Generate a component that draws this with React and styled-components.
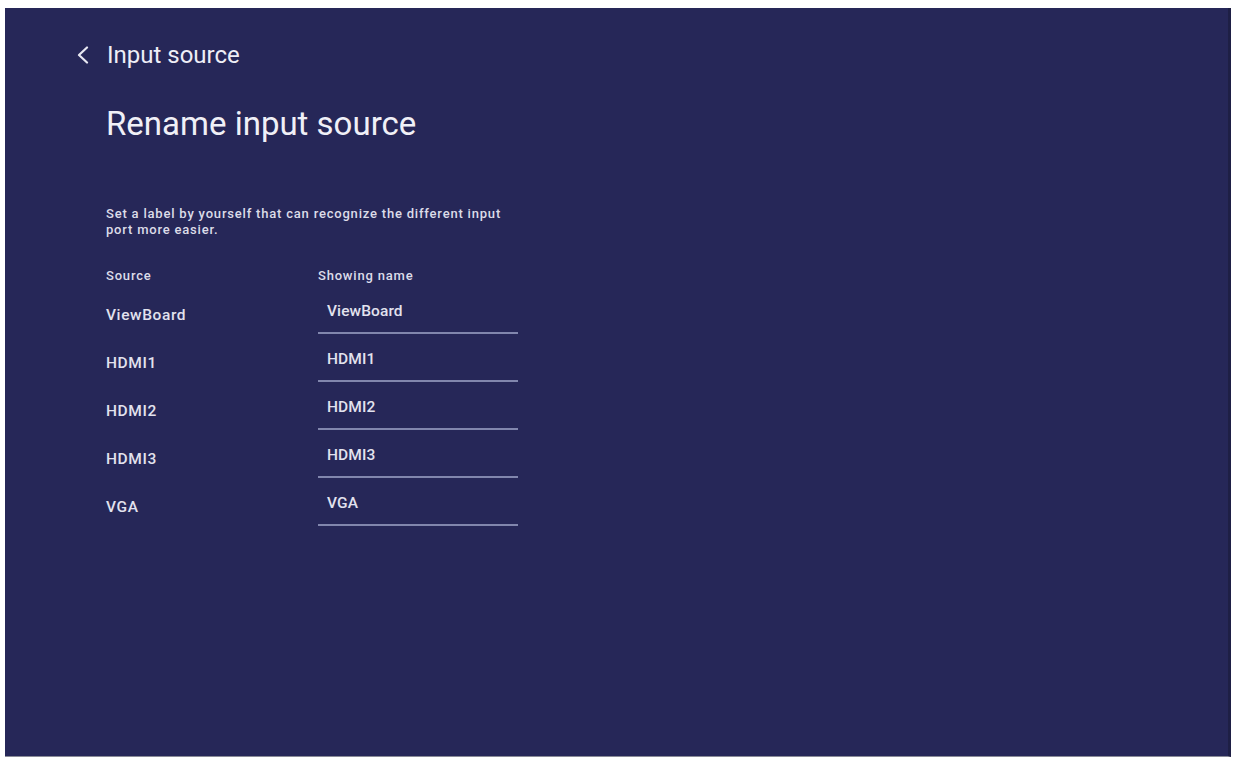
import React from "react";
import styled, { createGlobalStyle } from "styled-components";

const SOURCES = [
  { id: "viewboard", source: "ViewBoard", name: "ViewBoard" },
  { id: "hdmi1", source: "HDMI1", name: "HDMI1" },
  { id: "hdmi2", source: "HDMI2", name: "HDMI2" },
  { id: "hdmi3", source: "HDMI3", name: "HDMI3" },
  { id: "vga", source: "VGA", name: "VGA" },
];

const App = () => {
  return (
    <>
      <GlobalStyle />
      <Screen>
        <Panel>
          <BackBar>
            <BackIcon viewBox="0 0 14 18" aria-hidden="true">
              <path d="M11 1.5 L3 9 L11 16.5" />
            </BackIcon>
            <BackTitle>Input source</BackTitle>
          </BackBar>

          <Content>
            <PageTitle>Rename input source</PageTitle>
            <Description>
              Set a label by yourself that can recognize the different input
              <br />
              port more easier.
            </Description>

            <Table>
              <HeaderRow>
                <HeaderCell>Source</HeaderCell>
                <HeaderCell>Showing name</HeaderCell>
              </HeaderRow>
              {SOURCES.map((item) => (
                <Row key={item.id}>
                  <SourceLabel>{item.source}</SourceLabel>
                  <NameField>{item.name}</NameField>
                </Row>
              ))}
            </Table>
          </Content>
        </Panel>
      </Screen>
    </>
  );
};

export default App;

const GlobalStyle = createGlobalStyle`
  html, body {
    margin: 0;
    padding: 0;
    background: #ffffff;
  }
  body {
    font-family: Roboto, "Noto Sans", "Liberation Sans", sans-serif;
    -webkit-font-smoothing: antialiased;
  }
`;

const Screen = styled.div`
  width: 1234px;
  height: 760px;
  padding: 8px 3px 3px 5px;
  box-sizing: border-box;
  background: #ffffff;
`;

const Panel = styled.div`
  height: 100%;
  box-sizing: border-box;
  background: #262758;
  border-right: 3px solid #1e1f45;
  border-bottom: 1px solid #8a8b98;
  padding: 33px 0 0 71px;
  color: #eeeef6;
`;

const BackBar = styled.div`
  display: flex;
  align-items: center;
  gap: 17px;
  height: 28px;
`;

const BackIcon = styled.svg`
  width: 14px;
  height: 18px;
  fill: none;
  stroke: #e8e8f2;
  stroke-width: 2.2;
  stroke-linecap: round;
  stroke-linejoin: round;
`;

const BackTitle = styled.span`
  font-size: 24px;
  line-height: 28px;
  color: #eeeef6;
`;

const Content = styled.div`
  padding-left: 30px;
  margin-top: 35px;
  display: flex;
  flex-direction: column;
`;

const PageTitle = styled.h1`
  margin: 0;
  font-size: 33px;
  line-height: 40px;
  font-weight: 400;
  color: #f0f0f7;
`;

const Description = styled.p`
  margin: 62px 0 0;
  font-size: 13px;
  line-height: 16px;
  font-weight: 500;
  letter-spacing: 0.8px;
  color: #dcdce8;
`;

const Table = styled.div`
  margin-top: 28px;
  display: flex;
  flex-direction: column;
`;

const HeaderRow = styled.div`
  display: grid;
  grid-template-columns: 212px 200px;
  height: 20px;
  align-items: center;
`;

const HeaderCell = styled.span`
  font-size: 13px;
  line-height: 20px;
  font-weight: 500;
  letter-spacing: 0.8px;
  color: #dcdce8;
`;

const Row = styled.div`
  display: grid;
  grid-template-columns: 212px 200px;
  height: 48px;
`;

const SourceLabel = styled.span`
  padding-top: 18px;
  font-size: 15.5px;
  line-height: 22px;
  letter-spacing: 0.6px;
  font-weight: 500;
  color: #e2e2ee;
`;

const NameField = styled.div`
  box-sizing: border-box;
  height: 48px;
  padding: 14px 0 0 9px;
  font-size: 15.5px;
  line-height: 22px;
  letter-spacing: 0.1px;
  font-weight: 500;
  color: #e2e2ee;
  border-bottom: 2px solid #8186ad;
`;
